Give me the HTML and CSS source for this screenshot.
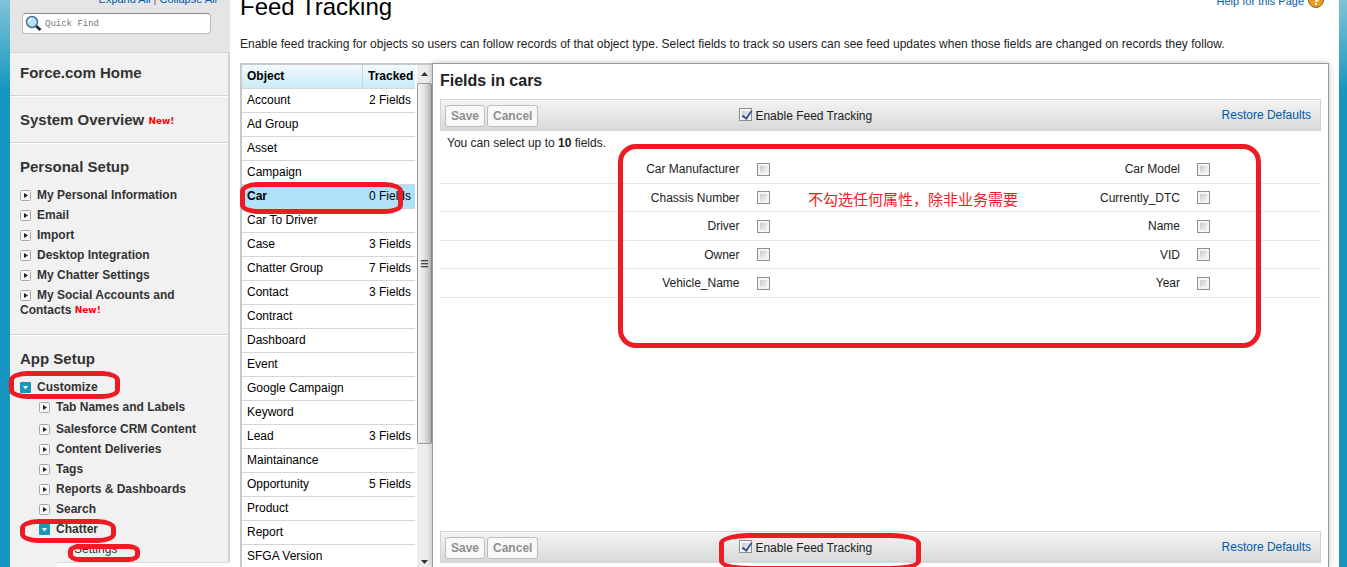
FILE: index.html
```
<!DOCTYPE html>
<html lang="en">
<head>
    <meta charset="UTF-8">
    <meta name="viewport" content="width=device-width, initial-scale=1.0">
    <title>Feed Tracking</title>
    <link rel="stylesheet" href="styles.css">
</head>
<body>
    <svg class="defs" width="0" height="0">
        <symbol id="closed" viewBox="0 0 11 11">
            <rect x="0.5" y="0.5" width="10" height="10" rx="1" fill="#f8f8f8" stroke="#a9a9a9"/>
            <path d="M4 3v5l4-2.5z" fill="#222"/>
        </symbol>
        <symbol id="open" viewBox="0 0 11 11">
            <rect width="11" height="11" rx="1" fill="#1797c0"/>
            <path d="M3 4h5L5.500 7.500z" fill="#fff"/>
        </symbol>
    </svg>

    <div class="page">
        <nav class="sidebar">
            <div class="sidebar-top">
                <p class="expand"><a href="#">Expand All</a> | <a href="#">Collapse All</a></p>
                <div class="search">
                    <svg width="18" height="18" viewBox="0 0 18 18">
                        <path d="M10.500 10.500l5 4.500" stroke="#222b3a" stroke-width="3"/>
                        <circle cx="7" cy="7" r="5.500" fill="#b5e0fa" stroke="#4a6f94" stroke-width="1.500"/>
                        <path d="M4 7a3 3 0 0 1 3-3" stroke="#fff" stroke-width="1.500" fill="none"/>
                    </svg>
                    <input type="text" placeholder="Quick Find" aria-label="Quick Find">
                </div>
            </div>
            <section class="section first">
                <h2><a href="#">Force.com Home</a></h2>
            </section>
            <section class="section">
                <h2><a href="#">System Overview</a> <span class="new">New!</span></h2>
            </section>
            <section class="section personal">
                <h2>Personal Setup</h2>
                <ul class="tree">
                    <li><button aria-label="Expand"><svg><use href="#closed"/></svg></button><a href="#">My Personal Information</a></li>
                    <li><button aria-label="Expand"><svg><use href="#closed"/></svg></button><a href="#">Email</a></li>
                    <li><button aria-label="Expand"><svg><use href="#closed"/></svg></button><a href="#">Import</a></li>
                    <li><button aria-label="Expand"><svg><use href="#closed"/></svg></button><a href="#">Desktop Integration</a></li>
                    <li><button aria-label="Expand"><svg><use href="#closed"/></svg></button><a href="#">My Chatter Settings</a></li>
                    <li><button aria-label="Expand"><svg><use href="#closed"/></svg></button><a href="#">My Social Accounts and Contacts</a> <span class="new">New!</span></li>
                </ul>
            </section>
            <section class="section last">
                <h2>App Setup</h2>
                <ul class="tree">
                    <li class="marked"><button aria-label="Collapse"><svg><use href="#open"/></svg></button><a href="#">Customize</a><span class="mark mark-customize"></span></li>
                </ul>
                <ul class="tree sub">
                    <li class="spaced"><button aria-label="Expand"><svg><use href="#closed"/></svg></button><a href="#">Tab Names and Labels</a></li>
                    <li><button aria-label="Expand"><svg><use href="#closed"/></svg></button><a href="#">Salesforce CRM Content</a></li>
                    <li><button aria-label="Expand"><svg><use href="#closed"/></svg></button><a href="#">Content Deliveries</a></li>
                    <li><button aria-label="Expand"><svg><use href="#closed"/></svg></button><a href="#">Tags</a></li>
                    <li><button aria-label="Expand"><svg><use href="#closed"/></svg></button><a href="#">Reports &amp; Dashboards</a></li>
                    <li><button aria-label="Expand"><svg><use href="#closed"/></svg></button><a href="#">Search</a></li>
                    <li class="marked"><button aria-label="Collapse"><svg><use href="#open"/></svg></button><a href="#">Chatter</a><span class="mark mark-chatter"></span></li>
                    <li class="marked leaf"><a href="#">Settings</a><span class="mark mark-settings"></span></li>
                </ul>
                <div class="next-box"></div>
            </section>
        </nav>

        <main class="main">
            <header class="header">
                <h1>Feed Tracking</h1>
                <a class="help" href="#">Help for this Page
                    <svg width="16" height="16" viewBox="0 0 16 16">
                        <circle cx="8" cy="8" r="7.500" fill="#ee9a1c" stroke="#8a5a1a"/>
                        <path d="M5.500 6a2.500 2.500 0 1 1 3.500 2.300q-1 .5-1 1.700M8 11v2" stroke="#fff" stroke-width="2" fill="none"/>
                    </svg>
                </a>
            </header>
            <p class="intro">Enable feed tracking for objects so users can follow records of that object type. Select fields to track so users can see feed updates when those fields are changed on records they follow.</p>

            <div class="tracking">
                <div class="objects">
                    <table class="object-table">
                        <thead>
                            <tr><th>Object</th><th>Tracked</th></tr>
                        </thead>
                        <tbody>
                            <tr><td>Account</td><td>2 Fields</td></tr>
                            <tr><td>Ad Group</td><td></td></tr>
                            <tr><td>Asset</td><td></td></tr>
                            <tr><td>Campaign</td><td></td></tr>
                            <tr class="selected"><td>Car</td><td>0 Fields</td></tr>
                            <tr><td>Car To Driver</td><td></td></tr>
                            <tr><td>Case</td><td>3 Fields</td></tr>
                            <tr><td>Chatter Group</td><td>7 Fields</td></tr>
                            <tr><td>Contact</td><td>3 Fields</td></tr>
                            <tr><td>Contract</td><td></td></tr>
                            <tr><td>Dashboard</td><td></td></tr>
                            <tr><td>Event</td><td></td></tr>
                            <tr><td>Google Campaign</td><td></td></tr>
                            <tr><td>Keyword</td><td></td></tr>
                            <tr><td>Lead</td><td>3 Fields</td></tr>
                            <tr><td>Maintainance</td><td></td></tr>
                            <tr><td>Opportunity</td><td>5 Fields</td></tr>
                            <tr><td>Product</td><td></td></tr>
                            <tr><td>Report</td><td></td></tr>
                            <tr><td>SFGA Version</td><td></td></tr>
                        </tbody>
                    </table>
                    <div class="scrollbar">
                        <svg width="15" height="18" viewBox="0 0 15 18"><path d="M4 11h7L7.500 7z" fill="#333"/></svg>
                        <div class="thumb"><i></i><i></i><i></i></div>
                        <svg width="15" height="18" viewBox="0 0 15 18"><path d="M4 11h7l-3.500 4z" fill="#333"/></svg>
                    </div>
                    <span class="mark mark-car"></span>
                </div>

                <section class="panel">
                    <h3>Fields in cars</h3>
                    <div class="toolbar">
                        <div class="buttons"><button disabled>Save</button><button disabled>Cancel</button></div>
                        <label><input type="checkbox" checked> Enable Feed Tracking</label>
                        <a href="#">Restore Defaults</a>
                    </div>
                    <p class="limit">You can select up to <b>10</b> fields.</p>
                    <table class="fields">
                        <tr>
                            <th><label for="manufacturer">Car Manufacturer</label></th><td><input type="checkbox" id="manufacturer"></td>
                            <th><label for="model">Car Model</label></th><td><input type="checkbox" id="model"></td>
                        </tr>
                        <tr>
                            <th><label for="chassis">Chassis Number</label></th><td><input type="checkbox" id="chassis"></td>
                            <th><label for="dtc">Currently_DTC</label></th><td><input type="checkbox" id="dtc"></td>
                        </tr>
                        <tr>
                            <th><label for="driver">Driver</label></th><td><input type="checkbox" id="driver"></td>
                            <th><label for="name">Name</label></th><td><input type="checkbox" id="name"></td>
                        </tr>
                        <tr>
                            <th><label for="owner">Owner</label></th><td><input type="checkbox" id="owner"></td>
                            <th><label for="vid">VID</label></th><td><input type="checkbox" id="vid"></td>
                        </tr>
                        <tr>
                            <th><label for="vehicle">Vehicle_Name</label></th><td><input type="checkbox" id="vehicle"></td>
                            <th><label for="year">Year</label></th><td><input type="checkbox" id="year"></td>
                        </tr>
                    </table>
                    <div class="toolbar bottom">
                        <div class="buttons"><button disabled>Save</button><button disabled>Cancel</button></div>
                        <label><input type="checkbox" checked> Enable Feed Tracking</label>
                        <a href="#">Restore Defaults</a>
                    </div>
                    <span class="mark mark-fields"></span>
                    <p class="note" lang="zh">不勾选任何属性，除非业务需要</p>
                    <span class="mark mark-enable"></span>
                </section>
            </div>
        </main>
    </div>
</body>
</html>
```
FILE: styles.css
```
* {
    box-sizing: border-box;
    margin: 0;
    padding: 0;
}

body {
    height: 100vh;
    overflow: hidden;
    padding: 0 8px 0 10px;
    background: linear-gradient(#7fc3d8, #1797c0 90px);
    font-family: "Liberation Sans", Arial, sans-serif;
    font-size: 12px;
    color: #222;
}

a {
    color: #015ba7;
    text-decoration: none;
}

ul {
    list-style: none;
}

.defs {
    position: absolute;
}

.page {
    display: flex;
    height: 100vh;
    background: #fff;
}

/* sidebar */
.sidebar {
    flex: none;
    width: 220px;
    background: #f1f1f1;
    border-right: 2px solid #d4d4d4;
}

.sidebar-top {
    height: 53px;
    background: #e5e5e5;
    border-bottom: 1px solid #d4d4d4;
    margin-right: -2px;
    padding: 0 19px 0 12px;
    display: flow-root;
}

.expand {
    margin: -8px -6px 7px 0;
    line-height: 14px;
    font-size: 11px;
    text-align: right;
    color: #666;
}

.search {
    display: flex;
    align-items: center;
    height: 21px;
    padding-left: 2px;
    background: #fff;
    border: 1px solid #bbb;
    border-top-color: #888;
    border-radius: 4px;
}

.search input {
    flex: 1;
    min-width: 0;
    margin-left: 2px;
    border: 0;
    outline: 0;
    background: none;
    font-family: "Liberation Mono", monospace;
    font-size: 9px;
}

.search input::placeholder {
    color: #777;
}

.section {
    padding: 14px 10px 13px;
    border-bottom: 1px solid #d4d4d4;
    box-shadow: 0 1px #fff;
    margin-bottom: 1px;
}

.section.first {
    padding-top: 11px;
}

.section.personal {
    padding-bottom: 11px;
}

.section.last {
    padding-bottom: 0;
    border: 0;
}

.section h2 {
    font-size: 15px;
    line-height: 18px;
    color: #333;
}

.section a {
    color: #333;
}

.new {
    font-family: "DejaVu Sans", sans-serif;
    font-size: 9px;
    font-weight: bold;
    line-height: 9px;
    vertical-align: 1px;
    color: #f00;
}

.tree {
    margin-top: 12px;
    font-weight: bold;
    line-height: 15px;
}

.tree li {
    margin-bottom: 5px;
}

.tree button {
    width: 11px;
    height: 11px;
    margin-right: 6px;
    border: 0;
    background: none;
    vertical-align: -2px;
}

.tree svg {
    display: block;
    width: 11px;
    height: 11px;
}

.tree.sub {
    margin-top: 0;
    padding-left: 19px;
}

.sub .spaced {
    margin-bottom: 7px;
}

.sub .leaf {
    padding-left: 35px;
    font-weight: normal;
}

.next-box {
    height: 10px;
    margin: 0 -12px 0 37px;
    border-top: 1px solid #ddd;
    background: #fff;
}

/* main column */
.main {
    flex: 1;
    min-width: 0;
    display: flex;
    flex-direction: column;
    padding: 0 10px;
}

.header {
    display: flex;
    justify-content: space-between;
    margin-top: -7px;
}

.header h1 {
    font-size: 24px;
    font-weight: normal;
    line-height: 28px;
    color: #000;
}

.help {
    display: flex;
    gap: 4px;
    padding-right: 5px;
    font-size: 11px;
    line-height: 16px;
}

.help svg {
    margin-top: -1px;
}

.intro {
    margin: 15px 0 11px;
    line-height: 16px;
    white-space: nowrap;
}

.tracking {
    flex: 1;
    min-height: 0;
    display: flex;
}

.objects,
.panel {
    height: 100%;
}

/* object list */
.objects {
    position: relative;
    flex: none;
    display: flex;
    align-items: flex-start;
    width: 192px;
    border: 2px solid #c5cacd;
    border-width: 2px 0 0 2px;
    color: #000;
}

.object-table {
    width: 173px;
    table-layout: fixed;
    border-spacing: 0;
}

.object-table th,
.object-table td {
    height: 24px;
    padding: 0 5px 1px;
    border-bottom: 1px solid #d1d8dc;
    text-align: left;
    white-space: nowrap;
}

.object-table th {
    background: linear-gradient(#f2fafd, #caeaf5);
}

.object-table th + th {
    width: 53px;
    border-left: 1px solid #c7d5da;
}

.object-table td + td {
    padding-right: 4px;
    text-align: right;
}

.object-table .selected {
    background: #afe1fa;
}

.selected td:first-child {
    font-weight: bold;
}

.scrollbar {
    display: flex;
    flex-direction: column;
    width: 15px;
    height: 100%;
    margin-left: 2px;
    background: #ececec;
}

.scrollbar svg {
    flex: none;
}

.thumb {
    display: flex;
    flex-direction: column;
    justify-content: center;
    align-items: center;
    gap: 1px;
    height: 72%;
    margin-bottom: auto;
    border: 1px solid #989898;
    border-radius: 2px;
    background: linear-gradient(90deg, #f5f5f5, #e4e4e6 45%, #bfbfc3);
}

.thumb i {
    width: 7px;
    height: 2px;
    border-top: 1px solid #444;
    background: #aaa;
}

/* field panel */
.panel {
    position: relative;
    flex: 1;
    min-width: 0;
    display: flex;
    flex-direction: column;
    padding: 7px 7px 4px;
    border: 1px solid #999;
    border-bottom: 0;
    box-shadow: 0 0 6px rgba(0, 0, 0, 0.25);
    background: #fff;
}

.panel h3 {
    font-size: 16px;
    line-height: 20px;
}

.toolbar {
    display: grid;
    grid-template-columns: 34% 33% 33%;
    align-items: center;
    height: 32px;
    margin-top: 8px;
    padding: 0 9px 0 4px;
    border: 1px solid #d0d4d6;
    border-bottom: 0;
    background: linear-gradient(#f4f4f4, #d6d8d8);
}

.toolbar.bottom {
    margin-top: auto;
}

.buttons {
    display: flex;
    gap: 2px;
}

.buttons button {
    height: 22px;
    padding: 0 5px;
    border: 1px solid #bfbfbf;
    border-radius: 3px;
    background: #f8f8f8;
    font: bold 12px "Liberation Sans", Arial, sans-serif;
    color: #909090;
}

.toolbar label {
    display: flex;
    gap: 3px;
    line-height: 16px;
    padding-top: 1px;
}

.toolbar > a {
    padding-bottom: 2px;
    text-align: right;
}

.panel input {
    appearance: none;
    display: block;
    width: 13px;
    height: 13px;
    border: 1px solid #8e8f8f;
    background: linear-gradient(135deg, #c4c8cf, #f6f6f6) 2px 2px / 7px 7px no-repeat, #f4f4f4;
}

.toolbar input:checked::after {
    content: "";
    display: block;
    width: 4px;
    height: 8px;
    margin-left: 4px;
    border: solid #3d559b;
    border-width: 0 2px 2px 0;
    transform: rotate(35deg);
}

.limit {
    padding: 4px 0 4px 7px;
    line-height: 16px;
}

.fields {
    width: 100%;
    table-layout: fixed;
    border-spacing: 0;
}

.fields th {
    width: 34%;
    font-weight: normal;
    text-align: right;
}

.fields td {
    padding-left: 17px;
}

.fields th,
.fields td {
    height: 28px;
    border-bottom: 1px solid #e8eaea;
}

.fields tr:nth-child(odd) > * {
    height: 29px;
}

/* red annotations */
.marked {
    position: relative;
}

.mark {
    position: absolute;
    border: 5px solid #ed1c24;
    border-radius: 18px / 9px;
    pointer-events: none;
}

.mark-customize {
    inset: -9px 98px -4px -11px;
}

.mark-chatter {
    inset: -3px 102px -6px -19px;
}

.mark-settings {
    inset: 2px 78px -5px 29px;
    border-radius: 12px / 7px;
}

.mark-car {
    left: -2px;
    top: 117px;
    width: 163px;
    height: 32px;
}

.mark-fields {
    inset: 80px 67px auto 185px;
    height: 204px;
    border-radius: 18px;
}

.mark-enable {
    left: 286px;
    bottom: -4px;
    width: 202px;
    height: 38px;
    border-radius: 30px / 10px;
}

.note {
    position: absolute;
    left: 375px;
    top: 125px;
    font-family: "Noto Sans CJK SC", sans-serif;
    font-size: 15px;
    line-height: 20px;
    color: #ed1c24;
}
```
